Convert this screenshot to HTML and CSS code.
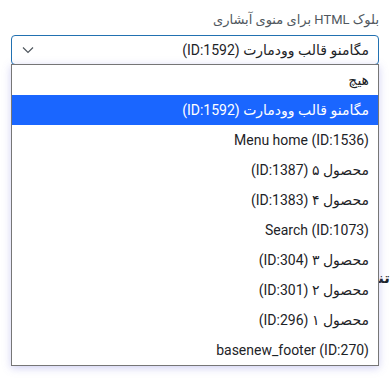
FILE: index.html
```html
<!DOCTYPE html>
<html lang="fa" dir="rtl">
  <head>
    <meta charset="UTF-8" />
    <meta name="viewport" content="width=device-width, initial-scale=1.0" />
    <title>بلوک HTML برای منوی آبشاری</title>
    <link rel="stylesheet" href="styles.css">
  </head>
  <body>
    <div class="field">
      <label class="field-label">بلوک HTML برای منوی آبشاری</label>

      <div class="select">
        <span class="select-value">مگامنو قالب وودمارت (ID:1592)</span>
        <svg class="chevron" width="12" height="8" viewBox="0 0 12 8">
          <polyline points="1,1.5 6,6.5 11,1.5" fill="none" stroke="#50575e" stroke-width="1.2" />
        </svg>
      </div>

      <ul class="options">
        <li>هیچ</li>
        <li class="active">مگامنو قالب وودمارت (ID:1592)</li>
        <li>Menu home (ID:1536)</li>
        <li>محصول ۵ (ID:1387)</li>
        <li>محصول ۴ (ID:1383)</li>
        <li>Search (ID:1073)</li>
        <li>محصول ۳ (ID:304)</li>
        <li>محصول ۲ (ID:301)</li>
        <li>محصول ۱ (ID:296)</li>
        <li>basenew_footer (ID:270)</li>
      </ul>
    </div>

    <h3 class="section-title">تنظیمات</h3>
  </body>
</html>
```

FILE: styles.css
```css
html,
body {
  min-height: 386px;
}

body {
  margin: 0;
  font-family: "Roboto", "DejaVu Sans", sans-serif;
  color: #1d2327;
  background: #ffffff;
}

.field {
  position: relative;
  padding: 11px 12px 0 11px;
}

.field-label {
  display: block;
  font-size: 13px;
  line-height: 18px;
  color: #50575e;
  margin-bottom: 6px;
}

.select {
  display: flex;
  align-items: center;
  justify-content: space-between;
  height: 28px;
  padding: 0 9px 0 10px;
  border: 1px solid #2271b1;
  border-radius: 4px;
  font-size: 14px;
}

.chevron {
  display: block;
}

/* open dropdown list */
.options {
  position: absolute;
  z-index: 2;
  top: 64px;
  left: 11px;
  right: 12px;
  margin: 0;
  padding: 0;
  list-style: none;
  background: #ffffff;
  border: 1px solid #767676;
  box-shadow: 0 2px 8px rgba(120, 120, 220, 0.35);
  font-size: 14px;
}

.options li {
  height: 30px;
  line-height: 30px;
  padding: 0 9px;
  white-space: nowrap;
}

.options li.active {
  background: #1a66ff;
  color: #ffffff;
}

.section-title {
  margin: 204px 0 0 0;
  padding-right: 1px;
  font-size: 15px;
  font-weight: bold;
  color: #1d2327;
}
```
